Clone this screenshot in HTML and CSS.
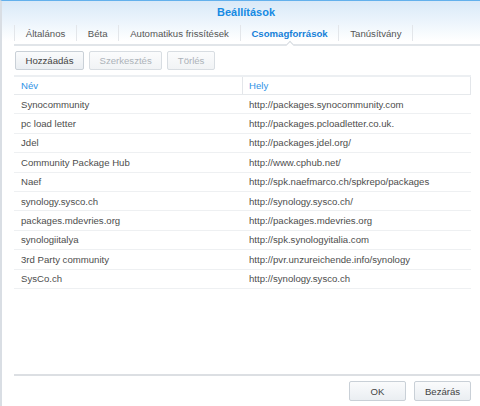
FILE: index.html
```html
<!DOCTYPE html>
<html lang="hu">
<head>
<meta charset="utf-8">
<title>Beállítások</title>
<link rel="stylesheet" href="styles.css">
</head>
<body>
<div class="window">
  <div class="titlebar">Beállítások</div>
  <div class="tabs">
    <div class="tab">Általános</div>
    <div class="tab">Béta</div>
    <div class="tab">Automatikus frissítések</div>
    <div class="tab active">Csomagforrások</div>
    <div class="tab">Tanúsítvány</div>
  </div>
  <div class="content">
    <div class="toolbar">
      <button class="btn">Hozzáadás</button>
      <button class="btn disabled">Szerkesztés</button>
      <button class="btn disabled">Törlés</button>
    </div>
    <div class="grid">
      <div class="row head">
        <div class="cell c1">Név</div>
        <div class="cell c2">Hely</div>
      </div>
      <div class="row"><div class="cell c1">Synocommunity</div><div class="cell c2">http://packages.synocommunity.com</div></div>
      <div class="row"><div class="cell c1">pc load letter</div><div class="cell c2">http://packages.pcloadletter.co.uk.</div></div>
      <div class="row"><div class="cell c1">Jdel</div><div class="cell c2">http://packages.jdel.org/</div></div>
      <div class="row"><div class="cell c1">Community Package Hub</div><div class="cell c2">http://www.cphub.net/</div></div>
      <div class="row"><div class="cell c1">Naef</div><div class="cell c2">http://spk.naefmarco.ch/spkrepo/packages</div></div>
      <div class="row"><div class="cell c1">synology.sysco.ch</div><div class="cell c2">http://synology.sysco.ch/</div></div>
      <div class="row"><div class="cell c1">packages.mdevries.org</div><div class="cell c2">http://packages.mdevries.org</div></div>
      <div class="row"><div class="cell c1">synologiitalya</div><div class="cell c2">http://spk.synologyitalia.com</div></div>
      <div class="row"><div class="cell c1">3rd Party community</div><div class="cell c2">http://pvr.unzureichende.info/synology</div></div>
      <div class="row"><div class="cell c1">SysCo.ch</div><div class="cell c2">http://synology.sysco.ch</div></div>
    </div>
  </div>
  <div class="footer">
    <button class="btn wide">OK</button>
    <button class="btn wide">Bezárás</button>
  </div>
</div>
</body>
</html>
```
FILE: styles.css
```css
html, body {
  margin: 0;
  padding: 0;
  background: #ffffff;
}
body {
  font-family: "Liberation Sans", Arial, sans-serif;
  font-size: 9.6px;
  color: #4d4d4d;
}
.window {
  height: 406px;
  box-sizing: border-box;
  border-left: 2px solid #d9dee4;
  display: flex;
  flex-direction: column;
  background: linear-gradient(to bottom, #d9e9f8 0px, #edf5fc 22px, #ffffff 40px);
  border-top: 1px solid #63b0ec;
}
.titlebar {
  height: 21px;
  line-height: 22px;
  text-align: center;
  font-size: 11px;
  font-weight: bold;
  color: #168ae3;
  padding-left: 10px;
}
.tabs {
  display: flex;
  height: 22px;
  margin-left: 12px;
  border-bottom: 2px solid #e1e5e9;
  align-items: center;
}
.tab {
  position: relative;
  padding: 0 10.8px;
  height: 16px;
  line-height: 17px;
  border-right: 1px solid #e3e6ea;
  color: #555555;
  margin-top: 0;
}
.tab:first-child {
  border-left: 1px solid #e3e6ea;
}
.tab.active {
  color: #1580d8;
  font-weight: bold;
}
.tab.active::after {
  content: "";
  position: absolute;
  left: 50%;
  bottom: -7px;
  width: 5px;
  height: 5px;
  margin-left: -3px;
  background: #ffffff;
  border-top: 1.5px solid #d6dbe0;
  border-left: 1.5px solid #d6dbe0;
  transform: rotate(45deg);
}
.content {
  flex: 1;
  display: flex;
  flex-direction: column;
  padding: 0 9px 0 12px;
}
.toolbar {
  display: flex;
  gap: 5px;
  padding: 5px 0 5px 1px;
}
.btn {
  font-family: inherit;
  font-size: 9.6px;
  height: 19px;
  padding: 0 9.5px;
  border: 1px solid #c9d0d7;
  border-radius: 2px;
  background: linear-gradient(to bottom, #fafbfc, #eaeef2);
  color: #444444;
  box-sizing: border-box;
  cursor: default;
}
.btn.disabled {
  color: #adb3b9;
  border-color: #d8dde2;
  background: linear-gradient(to bottom, #fbfcfd, #f1f3f5);
}
.grid {
  flex: 1;
  border-top: 2px solid #eceff2;
}
.row {
  display: flex;
  height: 19.4px;
  box-sizing: border-box;
  border-bottom: 1px solid #eef0f2;
  align-items: center;
}
.row.head {
  height: 18px;
  border-bottom: 1px solid #e6e9ec;
  color: #2f93e6;
  border-right: 1px solid #e3e6ea;
}
.cell {
  white-space: nowrap;
  overflow: hidden;
}
.c1 {
  width: 229px;
  box-sizing: border-box;
  padding-left: 7px;
}
.c2 {
  flex: 1;
  padding-left: 6px;
}
.row.head .c1 {
  border-right: 1px solid #e3e6ea;
  height: 100%;
  line-height: 18px;
}
.footer {
  height: 32px;
  box-sizing: border-box;
  margin-left: 12px;
  border-top: 2px solid #dcdfe3;
  display: flex;
  justify-content: flex-end;
  gap: 8px;
  padding: 5px 9px 0 0;
}
.btn.wide {
  height: 20px;
  width: 57px;
  padding: 0;
}
```
